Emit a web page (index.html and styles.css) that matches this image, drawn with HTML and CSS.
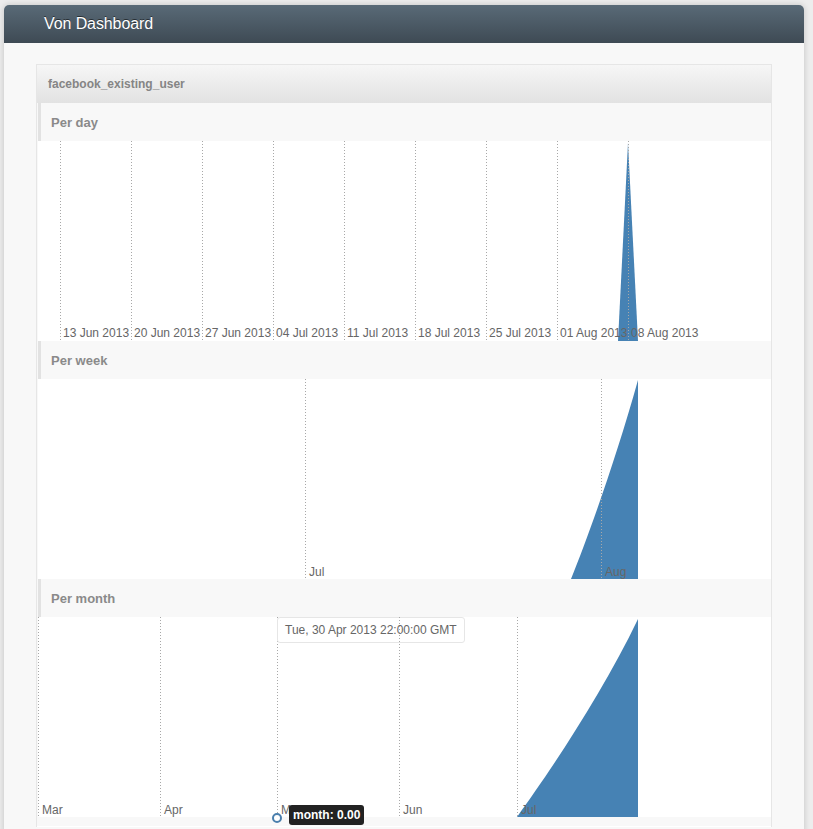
FILE: index.html
```html
<!DOCTYPE html>
<html>
<head>
<meta charset="utf-8">
<title>Von Dashboard</title>
<link rel="stylesheet" href="styles.css">
</head>
<body>
<div class="app">
  <header class="topbar"><h1 class="brand">Von Dashboard</h1></header>
  <main class="content">
    <section class="panel">
      <div class="panel-title">facebook_existing_user</div>

      <div class="block">
        <h2 class="block-title">Per day</h2>
        <div class="chart">
          <svg class="plot" width="732" height="200" viewBox="0 0 732 200">
            <path class="area" d="M580,200 L590,2 L600,200 Z"/>
            <g class="grid">
              <line x1="22.5" y1="0" x2="22.5" y2="200"/>
              <line x1="93.5" y1="0" x2="93.5" y2="200"/>
              <line x1="164.5" y1="0" x2="164.5" y2="200"/>
              <line x1="235.5" y1="0" x2="235.5" y2="200"/>
              <line x1="306.5" y1="0" x2="306.5" y2="200"/>
              <line x1="377.5" y1="0" x2="377.5" y2="200"/>
              <line x1="448.5" y1="0" x2="448.5" y2="200"/>
              <line x1="519.5" y1="0" x2="519.5" y2="200"/>
              <line x1="590.5" y1="0" x2="590.5" y2="200"/>
            </g>
            <g class="ticks">
              <text x="25" y="196">13 Jun 2013</text>
              <text x="96" y="196">20 Jun 2013</text>
              <text x="167" y="196">27 Jun 2013</text>
              <text x="238" y="196">04 Jul 2013</text>
              <text x="309" y="196">11 Jul 2013</text>
              <text x="380" y="196">18 Jul 2013</text>
              <text x="451" y="196">25 Jul 2013</text>
              <text x="522" y="196">01 Aug 2013</text>
              <text x="593" y="196">08 Aug 2013</text>
            </g>
          </svg>
        </div>
      </div>

      <div class="block">
        <h2 class="block-title">Per week</h2>
        <div class="chart">
          <svg class="plot" width="732" height="200" viewBox="0 0 732 200">
            <path class="area" d="M533,200 C550,158 578,80 600,1 L600,200 Z"/>
            <g class="grid">
              <line x1="267.5" y1="0" x2="267.5" y2="200"/>
              <line x1="563.5" y1="0" x2="563.5" y2="200"/>
            </g>
            <g class="ticks">
              <text x="271" y="197">Jul</text>
              <text x="567" y="197">Aug</text>
            </g>
          </svg>
        </div>
      </div>

      <div class="block">
        <h2 class="block-title">Per month</h2>
        <div class="chart">
          <svg class="plot" width="732" height="200" viewBox="0 0 732 200">
            <path class="area" d="M479,200 C515,150 565,75 600,2 L600,200 Z"/>
            <g class="grid">
              <line x1="0.5" y1="0" x2="0.5" y2="200"/>
              <line x1="122.5" y1="0" x2="122.5" y2="200"/>
              <line x1="239.5" y1="0" x2="239.5" y2="200"/>
              <line x1="479.5" y1="0" x2="479.5" y2="200"/>
            </g>
            <g class="ticks">
              <text x="4" y="197">Mar</text>
              <text x="126" y="197">Apr</text>
              <text x="243" y="197">May</text>
              <text x="365" y="197">Jun</text>
              <text x="483" y="197">Jul</text>
            </g>
          </svg>
          <div class="hover-date">Tue, 30 Apr 2013 22:00:00 GMT</div>
          <svg class="grid-over" width="2" height="200" viewBox="0 0 2 200"><line x1="0.5" y1="0" x2="0.5" y2="200"/></svg>
          <span class="hover-dot"></span>
          <div class="hover-value">month: 0.00</div>
        </div>
      </div>
      <div class="panel-foot"></div>
    </section>
  </main>
</div>
</body>
</html>
```

FILE: styles.css
```css
html, body {
  margin: 0;
  padding: 0;
  background: #ededed;
  font-family: "Liberation Sans", Arial, sans-serif;
}

.app {
  width: 800px;
  margin: 5px 0 0 4px;
  box-shadow: 0 0 6px rgba(0, 0, 0, 0.18);
  border-radius: 5px 5px 0 0;
}

.topbar {
  height: 38px;
  display: flex;
  align-items: center;
  padding-left: 40px;
  border-radius: 5px 5px 0 0;
  background: linear-gradient(#596a77, #3e4a54);
}

.brand {
  margin: 0;
  font-size: 16px;
  font-weight: normal;
  color: #fff;
  letter-spacing: -0.1px;
  text-shadow: 0 -1px 0 rgba(0, 0, 0, 0.5);
}

.content {
  background: #f8f8f8;
  padding: 21px 32px 0 32px;
  min-height: 770px;
}

.panel {
  border: 1px solid #e6e6e6;
  border-bottom: 0;
  background: #f8f8f8;
  padding: 0 0 0 1px;
}

.panel-title {
  height: 38px;
  display: flex;
  align-items: center;
  padding-left: 11px;
  margin-left: -1px;
  font-size: 12px;
  font-weight: bold;
  color: #858585;
  background: linear-gradient(#f6f6f6, #e2e2e2);
}

.block-title {
  margin: 0;
  height: 38px;
  display: flex;
  align-items: center;
  padding-left: 10px;
  border-left: 3px solid #e2e2e2;
  font-size: 13px;
  font-weight: bold;
  color: #8a8a8a;
  background: #f8f8f8;
}

.chart {
  position: relative;
  height: 200px;
  background: #fff;
}

.plot {
  display: block;
}

.area {
  fill: #4682b4;
}

.grid line,
.grid-over line {
  stroke: #a8a8a8;
  stroke-width: 1;
  stroke-dasharray: 1 2;
}

.ticks text {
  font-family: "Liberation Sans", Arial, sans-serif;
  font-size: 12px;
  fill: #666;
}

.hover-date {
  position: absolute;
  left: 239px;
  top: 0;
  height: 24px;
  padding: 0 7px;
  display: flex;
  align-items: center;
  font-size: 12px;
  color: #666;
  background: #fff;
  border: 1px solid #e6e6e6;
  border-radius: 3px;
}

.grid-over {
  position: absolute;
  left: 361px;
  top: 0;
}

.hover-dot {
  position: absolute;
  left: 234px;
  top: 196px;
  width: 6px;
  height: 6px;
  border: 2px solid #4a7fad;
  border-radius: 50%;
  background: #fff;
}

.hover-value {
  position: absolute;
  left: 251px;
  top: 188px;
  height: 20px;
  padding: 0 4px;
  display: flex;
  align-items: center;
  font-size: 12px;
  font-weight: bold;
  color: #fff;
  background: #222;
  border-radius: 3px;
}

.panel-foot {
  height: 9px;
  margin-left: -1px;
  background: #f8f8f8;
  border-bottom: 1px solid #fff;
}
```
